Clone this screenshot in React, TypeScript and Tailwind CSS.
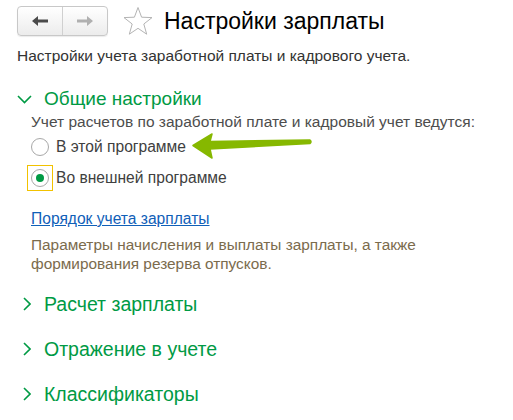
import { useState } from 'react'

const SECTIONS = ['Расчет зарплаты', 'Отражение в учете', 'Классификаторы']

function NavButtons() {
  return (
    <div className="flex h-[30px] w-[91px] rounded-[4px] border border-[#c8c8c8] bg-gradient-to-b from-white to-[#ececec] shadow-[0_1px_1px_rgba(0,0,0,0.08)]">
      <button className="flex flex-1 items-center justify-center border-r border-[#d0d0d0]">
        <svg width="16" height="10" viewBox="0 0 16 10">
          <path d="M0 5 L6 0 V3.5 H16 V6.5 H6 V10 Z" fill="#4a4a4a" />
        </svg>
      </button>
      <button className="flex flex-1 items-center justify-center">
        <svg width="16" height="10" viewBox="0 0 16 10">
          <path d="M16 5 L10 0 V3.5 H0 V6.5 H10 V10 Z" fill="#b0b0b0" />
        </svg>
      </button>
    </div>
  )
}

function Star() {
  return (
    <svg width="32" height="30" viewBox="0 0 32 30">
      <path
        d="M16 1.5 L19.6 11.2 L30 11.6 L21.8 18 L24.7 28.2 L16 22.3 L7.3 28.2 L10.2 18 L2 11.6 L12.4 11.2 Z"
        fill="none"
        stroke="#b4b4b4"
        strokeWidth="1"
        strokeLinejoin="round"
      />
    </svg>
  )
}

function Radio({ checked, focused }: { checked: boolean; focused?: boolean }) {
  return (
    <span
      className={
        focused
          ? 'flex h-[26px] w-[26px] items-center justify-center border border-[#f2c200]'
          : 'flex h-[26px] w-[26px] items-center justify-center border border-transparent'
      }
    >
      <span className="flex h-[18px] w-[18px] items-center justify-center rounded-full border border-[#a8a8a8] bg-white">
        {checked && <span className="h-[8px] w-[8px] rounded-full bg-[#009a44]" />}
      </span>
    </span>
  )
}

function GreenArrow() {
  return (
    <svg className="pointer-events-none absolute left-[191px] top-[132px]" width="122" height="28" viewBox="0 0 122 28">
      <path
        d="M2 13.5 L21 2 L19 9.5 L119 8 Q121 9.5 119 11.5 L19 17 L21 26 Z"
        fill="#86b800"
        stroke="#86b800"
        strokeWidth="1.5"
        strokeLinejoin="round"
      />
    </svg>
  )
}

export default function App() {
  const [mode, setMode] = useState<'inner' | 'outer'>('outer')

  return (
    <div className="relative h-[420px] w-[513px] overflow-hidden bg-white font-['Liberation_Sans',Arial,sans-serif]">
      {/* Header */}
      <div className="flex items-center gap-[14px] pl-[17px] pt-[6px]">
        <NavButtons />
        <div className="flex items-center gap-[10px]">
          <Star />
          <h1 className="text-[23px] leading-[30px] text-black">Настройки зарплаты</h1>
        </div>
      </div>

      <p className="mt-[11px] pl-[17px] text-[15.5px] leading-[18px] text-[#333]">
        Настройки учета заработной платы и кадрового учета.
      </p>

      {/* Общие настройки */}
      <div className="mt-[23px] pl-[17px]">
        <div className="flex items-center gap-[12px]">
          <svg width="15" height="9" viewBox="0 0 15 9">
            <path d="M1 1 L7.5 7.5 L14 1" fill="none" stroke="#009a44" strokeWidth="1.6" />
          </svg>
          <span className="text-[19px] leading-[22px] text-[#009a44]">Общие настройки</span>
        </div>

        <div className="pl-[14px]">
          <p className="mt-[3px] text-[15.5px] leading-[18px] text-[#4d4d4d]">
            Учет расчетов по заработной плате и кадровый учет ведутся:
          </p>

          <div className="-ml-[4px] mt-[3px] flex flex-col gap-[5px]">
            <label className="flex cursor-pointer items-center gap-[3px]" onClick={() => setMode('inner')}>
              <Radio checked={mode === 'inner'} focused={mode === 'inner'} />
              <span className="text-[15.6px] leading-[18px] text-[#404040]">В этой программе</span>
            </label>
            <label className="flex cursor-pointer items-center gap-[3px]" onClick={() => setMode('outer')}>
              <Radio checked={mode === 'outer'} focused={mode === 'outer'} />
              <span className="text-[15.6px] leading-[18px] text-[#404040]">Во внешней программе</span>
            </label>
          </div>

          <a href="#" className="mt-[19px] block text-[15.6px] leading-[18px] text-[#1060b8] underline">
            Порядок учета зарплаты
          </a>

          <p className="mt-[7px] text-[15.4px] leading-[19px] text-[#7b6b4d]">
            Параметры начисления и выплаты зарплаты, а также
            <br />
            формирования резерва отпусков.
          </p>
        </div>
      </div>

      {/* Collapsed sections */}
      <div className="mt-[20px] flex flex-col gap-[23px] pl-[23px]">
        {SECTIONS.map((s) => (
          <div key={s} className="flex items-center gap-[13px]">
            <svg width="8" height="14" viewBox="0 0 8 14">
              <path d="M1 1 L7 7 L1 13" fill="none" stroke="#009a44" strokeWidth="1.6" />
            </svg>
            <span className="text-[19.5px] leading-[22px] text-[#009a44]">{s}</span>
          </div>
        ))}
      </div>

      <GreenArrow />
    </div>
  )
}
